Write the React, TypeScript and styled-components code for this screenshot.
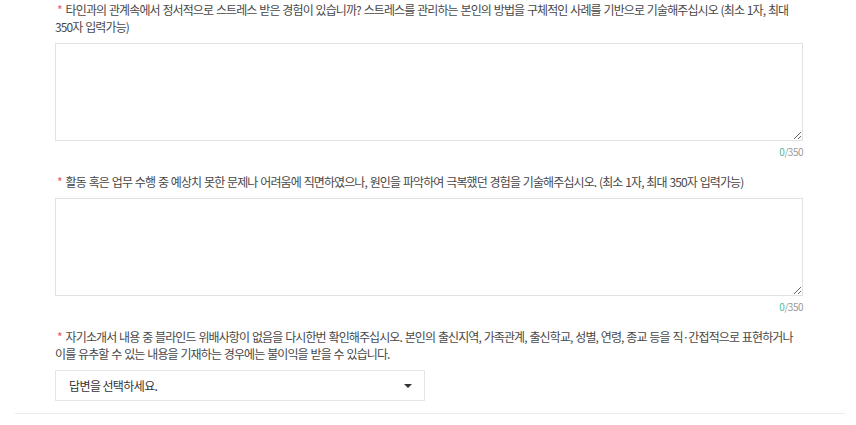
import React from "react";
import styled, { createGlobalStyle } from "styled-components";

const GlobalStyle = createGlobalStyle`
  body {
    margin: 0;
    background: #fff;
    font-family: "Noto Sans CJK KR", "Noto Sans", sans-serif;
    color: #444;
  }
`;

interface Question {
  id: number;
  text: string;
  max?: number;
  select?: boolean;
}

const questions: Question[] = [
  {
    id: 1,
    text: "타인과의 관계속에서 정서적으로 스트레스 받은 경험이 있습니까? 스트레스를 관리하는 본인의 방법을 구체적인 사례를 기반으로 기술해주십시오 (최소 1자, 최대 350자 입력가능)",
    max: 350,
  },
  {
    id: 2,
    text: "활동 혹은 업무 수행 중 예상치 못한 문제나 어려움에 직면하였으나, 원인을 파악하여 극복했던 경험을 기술해주십시오. (최소 1자, 최대 350자 입력가능)",
    max: 350,
  },
  {
    id: 3,
    text: "자기소개서 내용 중 블라인드 위배사항이 없음을 다시한번 확인해주십시오. 본인의 출신지역, 가족관계, 출신학교, 성별, 연령, 종교 등을 직·간접적으로 표현하거나 이를 유추할 수 있는 내용을 기재하는 경우에는 불이익을 받을 수 있습니다.",
    select: true,
  },
];

const App = () => {
  return (
    <>
      <GlobalStyle />
      <FormBlock>
        {questions.map((q) => (
          <QuestionItem key={q.id} hasSelect={!!q.select}>
            <Label required>{q.text}</Label>
            {q.select ? (
              <SelectBox>
                <span>답변을 선택하세요.</span>
                <Caret />
              </SelectBox>
            ) : (
              <>
                <TextArea />
                <Counter>
                  <em>0</em>/{q.max}
                </Counter>
              </>
            )}
          </QuestionItem>
        ))}
      </FormBlock>
    </>
  );
};

const FormBlock = styled.div`
  margin: 0 11px 0 15px;
  border-bottom: 1px solid #ebebeb;
  padding-bottom: 12px;
`;

const QuestionItem = styled.div<{ hasSelect: boolean }>`
  padding: 0 42px 0 40px;
  margin-bottom: ${(props) => (props.hasSelect ? "0" : "14px")};
  &:first-child {
    padding-top: 1px;
  }
`;

const Label = styled.p<{ required?: boolean }>`
  margin: 0 0 8px;
  font-size: 12px;
  line-height: 17px;
  color: #484848;
  letter-spacing: -0.9px;
  word-spacing: 1px;
  word-break: keep-all;
  &::before {
    content: ${(props) => (props.required ? '"*"' : "none")};
    display: inline-block;
    margin: 0 3px 0 2px;
    color: #e8566a;
    letter-spacing: 0;
  }
`;

const TextArea = styled.textarea`
  display: block;
  box-sizing: border-box;
  width: 100%;
  height: 98px;
  margin: 0;
  border: 1px solid #e2e2e2;
  background: #fff;
  resize: vertical;
  outline: none;
  font-family: inherit;
`;

const Counter = styled.div`
  margin-top: 4px;
  text-align: right;
  font-size: 10px;
  line-height: 14px;
  letter-spacing: -0.5px;
  color: #999;
  em {
    font-style: normal;
    color: #4bbfa6;
  }
`;

const SelectBox = styled.div`
  box-sizing: border-box;
  width: 370px;
  height: 31px;
  padding: 0 12px 0 13px;
  display: flex;
  align-items: center;
  justify-content: space-between;
  border: 1px solid #e6e6e6;
  font-size: 12px;
  letter-spacing: -0.6px;
  color: #333;
`;

const Caret = styled.i`
  width: 0;
  height: 0;
  border-left: 4px solid transparent;
  border-right: 4px solid transparent;
  border-top: 4px solid #333;
`;

export default App;
